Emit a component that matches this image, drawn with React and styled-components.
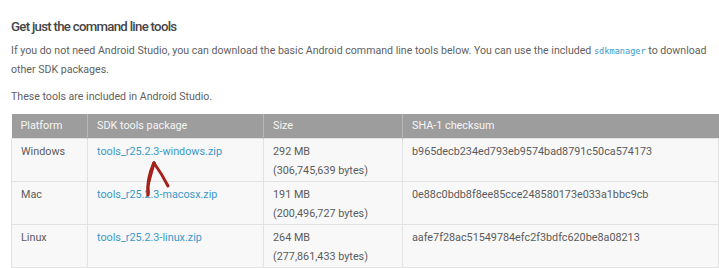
import React from 'react';
import styled, { createGlobalStyle } from 'styled-components';

const Global = createGlobalStyle`
  html, body {
    margin: 0;
    padding: 0;
    background: #ffffff;
  }
  body {
    font-family: Roboto, "Liberation Sans", Arial, sans-serif;
  }
`

const Page = styled.div`
  width: 719px;
  height: 268px;
  overflow: hidden;
  padding: 17px 0 0 11px;
  box-sizing: border-box;
`

const Title = styled.h2`
  margin: 0;
  font-size: 13.2px;
  font-weight: 500;
  letter-spacing: -0.7px;
  color: #454545;
  line-height: 20px;
`

const Text = styled.p`
  margin: ${(p) => p.$mt || 0}px 0 0 0;
  font-size: 10.6px;
  line-height: 19px;
  color: #5f5f5f;
`

const Code = styled.code`
  font-family: "DejaVu Sans Mono", "Liberation Mono", monospace;
  font-size: 8.6px;
  line-height: 1;
  color: #3a98c8;
`

const TableWrap = styled.div`
  position: relative;
  margin-top: 8px;
  width: 707px;
`

const Table = styled.table`
  border-collapse: collapse;
  width: 707px;
  table-layout: fixed;
  font-size: 10.8px;
`

const Th = styled.th`
  background: #9d9d9d;
  color: #f6f6f6;
  font-weight: 400;
  text-align: left;
  height: 24px;
  padding: 0 9px;
  border-left: 1px solid #b8b8b8;
  box-sizing: border-box;
  &:first-child { border-left: none; }
`

const Td = styled.td`
  background: #f8f8f8;
  color: #5b5b5b;
  vertical-align: top;
  padding: 3px 9px 0 9px;
  height: 43px;
  line-height: 19px;
  border: 1px solid #e2e2e2;
  box-sizing: border-box;
`

const Link = styled.a`
  color: #3a98c8;
  text-decoration: none;
`

const Arrow = styled.svg`
  position: absolute;
  left: 0;
  top: 0;
  pointer-events: none;
`

const rows = [
  ['Windows', 'tools_r25.2.3-windows.zip', '292 MB', '(306,745,639 bytes)', 'b965decb234ed793eb9574bad8791c50ca574173'],
  ['Mac', 'tools_r25.2.3-macosx.zip', '191 MB', '(200,496,727 bytes)', '0e88c0bdb8f8ee85cce248580173e033a1bbc9cb'],
  ['Linux', 'tools_r25.2.3-linux.zip', '264 MB', '(277,861,433 bytes)', 'aafe7f28ac51549784efc2f3bdfc620be8a08213'],
]

function App() {
  return (
    <Page>
      <Global />
      <Title>Get just the command line tools</Title>
      <Text $mt={4}>
        If you do not need Android Studio, you can download the basic Android command line tools below. You can use the included <Code>sdkmanager</Code> to download other SDK packages.
      </Text>
      <Text $mt={8}>These tools are included in Android Studio.</Text>
      <TableWrap>
        <Table>
          <colgroup>
            <col style={{ width: 76 }} />
            <col style={{ width: 176 }} />
            <col style={{ width: 139 }} />
            <col style={{ width: 316 }} />
          </colgroup>
          <thead>
            <tr>
              <Th>Platform</Th>
              <Th>SDK tools package</Th>
              <Th>Size</Th>
              <Th>SHA-1 checksum</Th>
            </tr>
          </thead>
          <tbody>
            {rows.map((r) => (
              <tr key={r[0]}>
                <Td>{r[0]}</Td>
                <Td><Link href="#">{r[1]}</Link></Td>
                <Td>{r[2]}<br />{r[3]}</Td>
                <Td>{r[4]}</Td>
              </tr>
            ))}
          </tbody>
        </Table>
        <Arrow width="707" height="154" viewBox="0 0 707 154">
          <g fill="none" stroke="#a3231a" strokeLinecap="round" strokeLinejoin="round">
            <path d="M143 49 C 139 58, 136 68, 137 81" strokeWidth="3.4" />
            <path d="M143 49 L 138 67" strokeWidth="3" />
            <path d="M143 49 C 148 56, 153 64, 157 72" strokeWidth="3" />
          </g>
        </Arrow>
      </TableWrap>
    </Page>
  )
}

export default App;
